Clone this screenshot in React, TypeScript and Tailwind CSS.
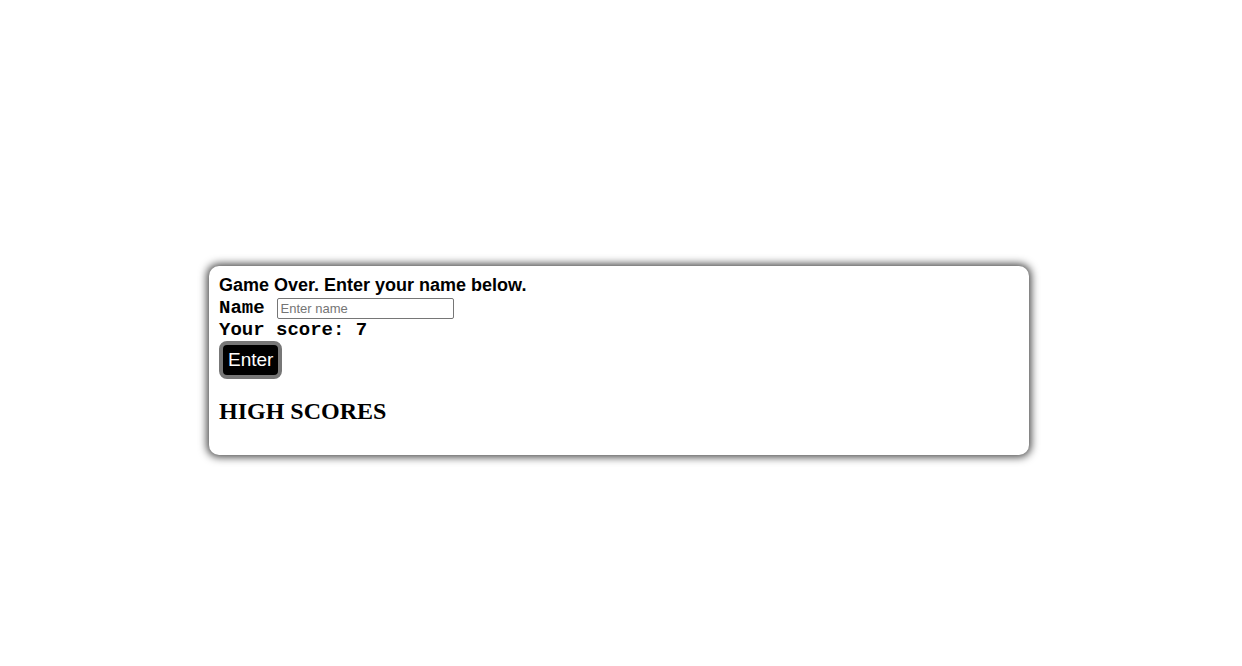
export default function App() {
  return (
    <div className="relative h-[666px] w-full bg-white">
      <div className="absolute left-[209px] top-[266px] w-[820px] h-[189px] rounded-[10px] bg-white shadow-[0_0_8px_2px_rgba(0,0,0,0.75)] px-[10px] pt-[7px]">
        <div className="font-['Liberation_Sans',Arial,sans-serif] font-bold text-[18px] leading-[25px] text-black">
          Game Over. Enter your name below.
        </div>
        <div className="flex items-center h-[21px]">
          <span className="font-['Liberation_Mono','Courier_New',monospace] font-bold text-[19px] leading-[21px] text-black">Name</span>
          <input
            placeholder="Enter name"
            className="ml-[12px] w-[177px] h-[21px] border border-[#767676] rounded-[2px] px-[3px] text-[13px] font-['Liberation_Sans',Arial,sans-serif] placeholder:text-[#757575] outline-none"
          />
        </div>
        <div className="font-['Liberation_Mono','Courier_New',monospace] font-bold text-[19px] leading-[22px] text-black">
          Your score: 7
        </div>
        <button className="h-[38px] px-[5px] rounded-[8px] border-[4px] border-[#777] bg-black text-white font-['Liberation_Sans',Arial,sans-serif] text-[19px] leading-[28px]">
          Enter
        </button>
        <h2 className="mt-[18px] font-['Liberation_Serif','Times_New_Roman',serif] font-bold text-[24px] leading-[28px] text-black">
          HIGH SCORES
        </h2>
      </div>
    </div>
  );
}
